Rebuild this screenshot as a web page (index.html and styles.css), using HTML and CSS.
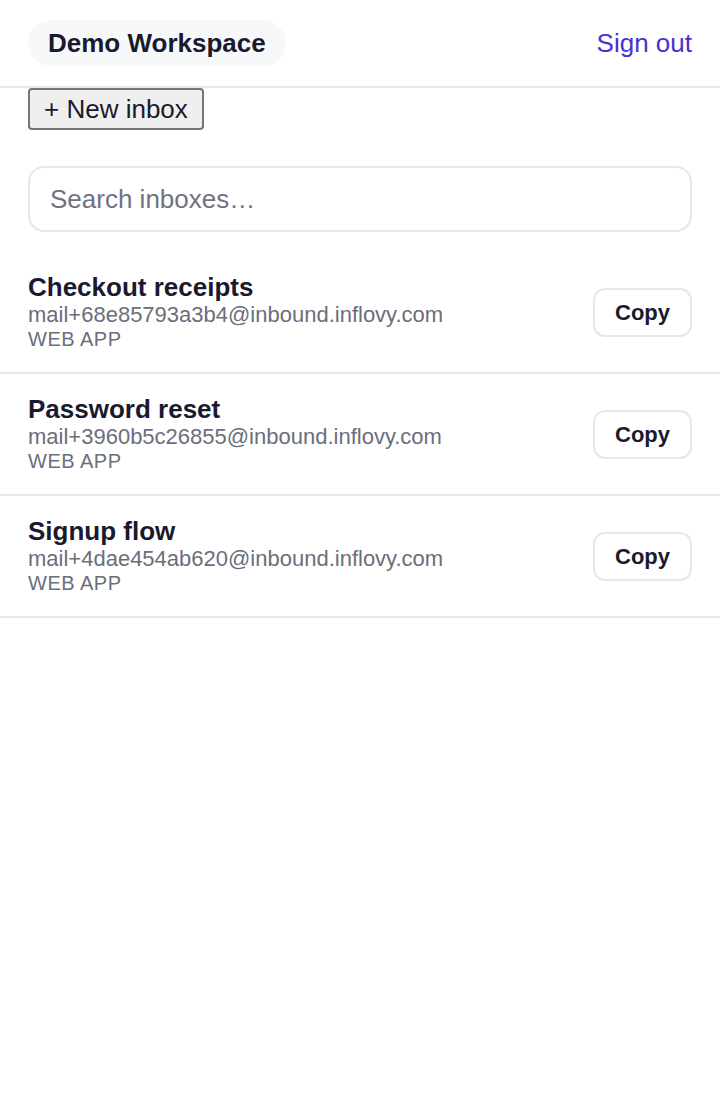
FILE: index.html
```html
<!DOCTYPE html>
<html lang="en">
<head>
<meta charset="utf-8">
<title>Inboxes</title>
<link rel="stylesheet" href="styles.css">
</head>
<body>
<header class="topbar">
  <div class="workspace">Demo Workspace</div>
  <a class="signout" href="#">Sign out</a>
</header>
<main class="content">
  <button class="new-inbox" type="button">+ New inbox</button>
  <input class="search" type="text" placeholder="Search inboxes…">
  <ul class="inbox-list">
    <li class="inbox">
      <div class="inbox-info">
        <div class="inbox-name">Checkout receipts</div>
        <div class="inbox-addr">mail+68e85793a3b4@inbound.inflovy.com</div>
        <div class="inbox-tag">WEB APP</div>
      </div>
      <button class="copy" type="button">Copy</button>
    </li>
    <li class="inbox">
      <div class="inbox-info">
        <div class="inbox-name">Password reset</div>
        <div class="inbox-addr">mail+3960b5c26855@inbound.inflovy.com</div>
        <div class="inbox-tag">WEB APP</div>
      </div>
      <button class="copy" type="button">Copy</button>
    </li>
    <li class="inbox">
      <div class="inbox-info">
        <div class="inbox-name">Signup flow</div>
        <div class="inbox-addr">mail+4dae454ab620@inbound.inflovy.com</div>
        <div class="inbox-tag">WEB APP</div>
      </div>
      <button class="copy" type="button">Copy</button>
    </li>
  </ul>
</main>
</body>
</html>
```

FILE: styles.css
```css
* { box-sizing: border-box; }
html, body {
  margin: 0;
  padding: 0;
  background: #ffffff;
}
body {
  font-family: "Liberation Sans", Arial, sans-serif;
  font-size: 26px;
  color: #1a1a2e;
}
.topbar {
  display: flex;
  align-items: center;
  justify-content: space-between;
  height: 88px;
  padding: 0 28px;
  border-bottom: 2px solid #e7e7ec;
}
.workspace {
  background: #f7f8fa;
  border-radius: 999px;
  padding: 8px 20px;
  font-weight: 700;
  font-size: 26px;
  line-height: 30px;
  color: #1a1a2e;
}
.signout {
  color: #4b2fd6;
  text-decoration: none;
  font-size: 26px;
  line-height: 30px;
}
.content {
  padding: 0 28px;
}
.new-inbox {
  display: block;
  font-family: "Liberation Sans", Arial, sans-serif;
  font-size: 26px;
  line-height: 30px;
  color: #1a1a2e;
  background: #efefef;
  border: 2px solid #767676;
  border-radius: 4px;
  padding: 4px 14px;
  margin: 0;
}
.search {
  display: block;
  width: 100%;
  margin-top: 36px;
  height: 66px;
  border: 2px solid #e5e7eb;
  border-radius: 16px;
  padding: 0 20px;
  font-family: "Liberation Sans", Arial, sans-serif;
  font-size: 26px;
  color: #1a1a2e;
  background: #fff;
  outline: none;
}
.search::placeholder {
  color: #70727f;
}
.inbox-list {
  list-style: none;
  margin: 20px -28px 0;
  padding: 0;
}
.inbox {
  display: flex;
  align-items: center;
  justify-content: space-between;
  gap: 16px;
  padding: 20px 28px 20px;
  border-bottom: 2px solid #e5e7eb;
}
.inbox-info {
  display: flex;
  flex-direction: column;
  min-width: 0;
}
.inbox-name {
  font-weight: 700;
  font-size: 26px;
  line-height: 30px;
  color: #1a1a2e;
}
.inbox-addr {
  font-size: 22px;
  line-height: 25px;
  color: #6b6e7b;
}
.inbox-tag {
  font-size: 20px;
  line-height: 25px;
  letter-spacing: 0.5px;
  color: #6b6e7b;
  text-transform: uppercase;
}
.copy {
  flex: none;
  font-family: "Liberation Sans", Arial, sans-serif;
  font-weight: 700;
  font-size: 22px;
  line-height: 25px;
  color: #1a1a2e;
  background: #fff;
  border: 2px solid #e5e7eb;
  border-radius: 12px;
  padding: 10px 20px;
}
```
